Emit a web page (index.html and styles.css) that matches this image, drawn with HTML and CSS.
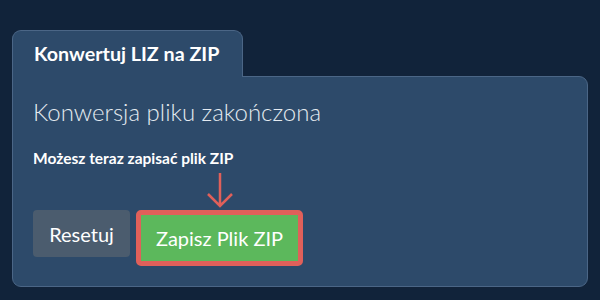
FILE: index.html
```html
<!DOCTYPE html>
<html lang="pl">
<head>
  <meta charset="UTF-8">
  <title>Konwertuj LIZ na ZIP</title>
  <link rel="stylesheet" href="styles.css">
</head>
<body>
  <div class="converter">
    <div class="tab">Konwertuj LIZ na ZIP</div>
    <div class="panel">
      <h2 class="status">Konwersja pliku zakończona</h2>
      <p class="hint">Możesz teraz zapisać plik ZIP</p>
      <div class="actions">
        <button class="reset">Resetuj</button>
        <div class="save-wrap">
          <svg class="arrow" width="30" height="36" viewBox="0 0 30 36">
            <path d="M15 1 V34 M3 22 L15 34 L27 22" fill="none" stroke="#e0605a" stroke-width="2.5"/>
          </svg>
          <button class="save">Zapisz Plik ZIP</button>
        </div>
      </div>
    </div>
  </div>
</body>
</html>
```

FILE: styles.css
```css
* {
  box-sizing: border-box;
  font-family: 'Lato', sans-serif;
}

body {
  margin: 0;
  background: #11233a;
  padding: 30px 12px 0 12px;
  height: 300px;
}

.converter {
  width: 576px;
}

.tab {
  position: relative;
  z-index: 1;
  width: 231px;
  height: 47px;
  margin-bottom: -1px;
  padding: 11px 0 0 21px;
  background: #2d4a6a;
  border: 1px solid #4b6686;
  border-bottom: none;
  border-radius: 9px 9px 0 0;
  color: #ffffff;
  font-size: 19.7px;
  font-weight: 700;
}

.panel {
  height: 211px;
  padding: 20px 20px 0 20px;
  background: #2d4a6a;
  border: 1px solid #4b6686;
  border-radius: 0 9px 9px 9px;
}

.status {
  margin: 0;
  color: #e4eaf0;
  font-size: 24px;
  font-weight: 300;
}

.hint {
  margin: 23px 0 0 0;
  color: #ffffff;
  font-size: 15.5px;
  font-weight: 700;
}

.actions {
  display: flex;
  align-items: flex-start;
  gap: 6px;
  margin-top: 43px;
}

button {
  border: none;
  color: #ffffff;
  font-size: 20px;
  cursor: pointer;
}

.reset {
  width: 97px;
  height: 47px;
  background: #4b5c6e;
  border-radius: 4px;
}

.save-wrap {
  position: relative;
}

.arrow {
  position: absolute;
  left: 69px;
  top: -38px;
}

.save {
  width: 167px;
  height: 56px;
  background: #5cb85c;
  border: 5px solid #e0605a;
  border-radius: 5px;
}
```
